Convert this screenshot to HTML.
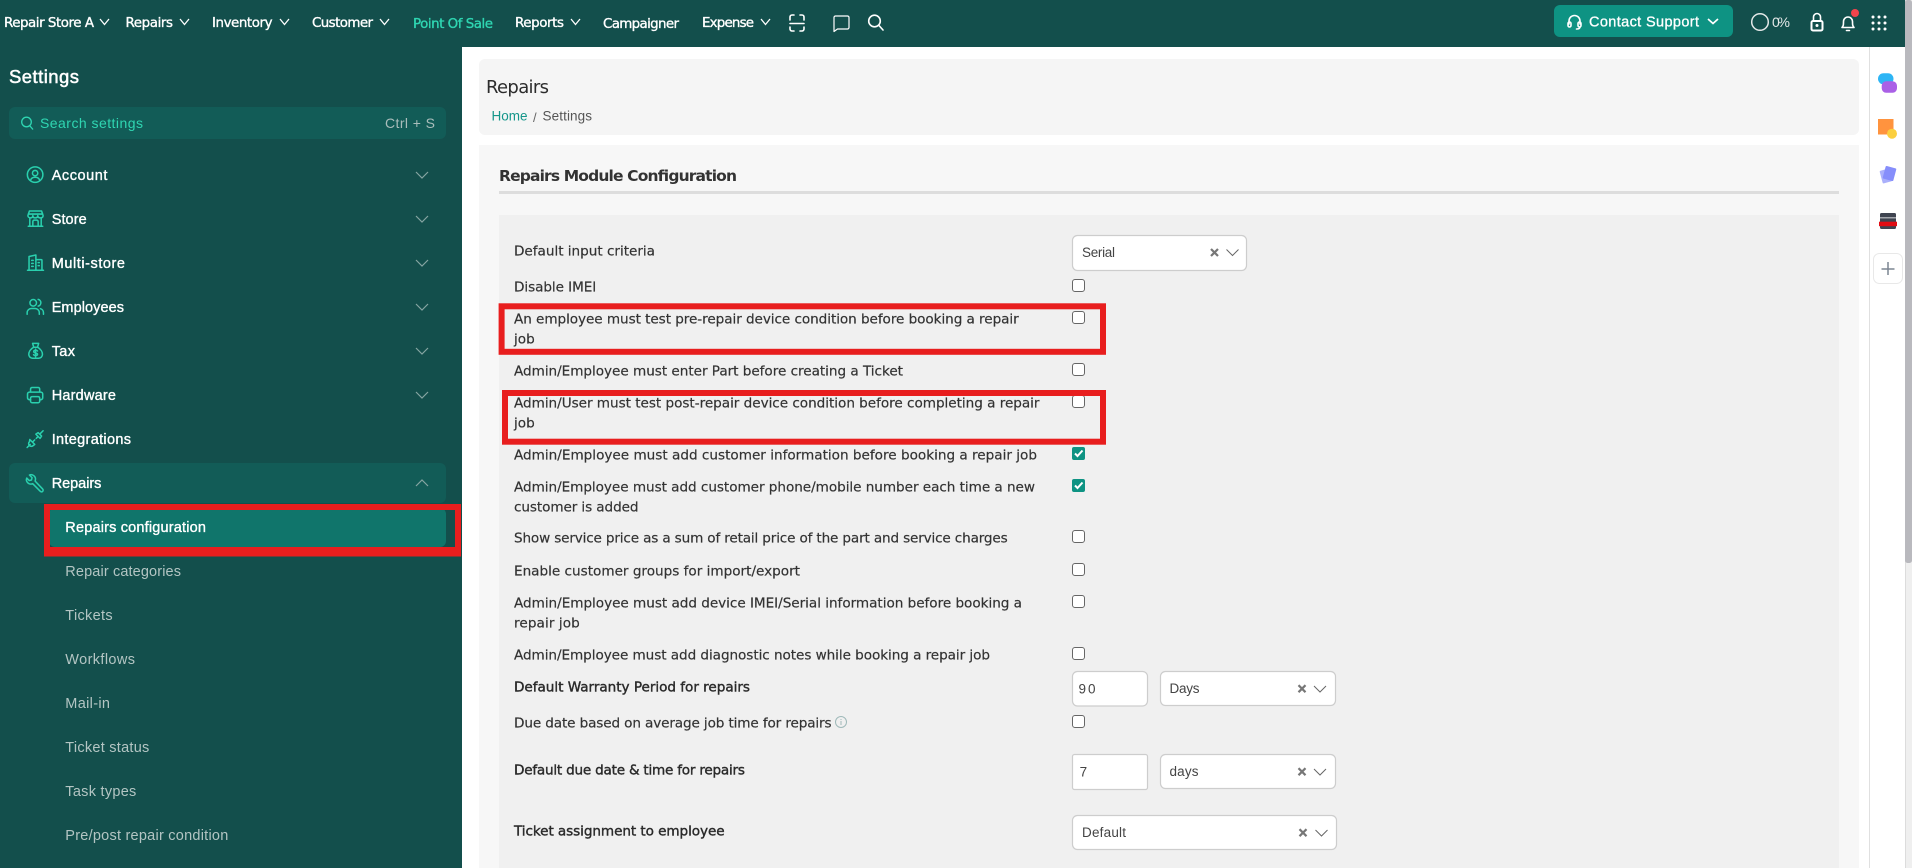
<!DOCTYPE html>
<html lang="en"><head><meta charset="utf-8"><title>Repairs Settings</title>
<style>
html,body{margin:0;padding:0;background:#fff;width:1912px;height:868px;overflow:hidden}
svg{display:block}
.nav{font:13.4px "DejaVu Sans",sans-serif;fill:#fff;stroke:#fff;stroke-width:.35}
.side{font:14.5px "Liberation Sans",sans-serif;fill:#fff;stroke:#fff;stroke-width:.35}
.sub{font:14.5px "Liberation Sans",sans-serif;fill:#b3c5c3}
.lbl{font:13.6px "DejaVu Sans",sans-serif;fill:#333;stroke:#333;stroke-width:.2}
.lbb{font:13.6px "DejaVu Sans",sans-serif;fill:#2a2a2a;stroke:#2a2a2a;stroke-width:.4}
.val{font:13.5px "Liberation Sans",sans-serif;fill:#444}
.ic{fill:none;stroke:#2ad0ae;stroke-width:2;stroke-linecap:round;stroke-linejoin:round}
.chv{fill:none;stroke:#86a5a2;stroke-width:1.2}
.nc{fill:none;stroke:#fff;stroke-width:1.3}
.w{fill:none;stroke:#fff;stroke-width:1.6;stroke-linecap:round;stroke-linejoin:round}
.cb{fill:#fff;stroke:#666;stroke-width:1}
.fld{fill:#fff;stroke:#cdcdcd;stroke-width:1.2}
.x{fill:none;stroke:#777;stroke-width:2.2}
.sc{fill:none;stroke:#666;stroke-width:1}
.red{fill:none;stroke:#e81e1e;stroke-width:6}
</style></head><body>
<svg xmlns="http://www.w3.org/2000/svg" width="1912" height="868" viewBox="0 0 1912 868">
<rect width="1912" height="868" fill="#fff"/>
<!-- header -->
<rect width="1905" height="47" fill="#134f4c"/>
<rect y="47" width="462" height="821" fill="#134f4c"/>
<g class="nav">
<text x="4" y="27" textLength="90">Repair Store A</text>
<text x="125.500" y="27" textLength="47.500">Repairs</text>
<text x="212" y="27" textLength="60.500">Inventory</text>
<text x="312" y="27" textLength="61">Customer</text>
<text x="413" y="28" textLength="80" style="fill:#2fd6b2;stroke:#2fd6b2">Point Of Sale</text>
<text x="515" y="27" textLength="49">Reports</text>
<text x="603" y="28" textLength="76">Campaigner</text>
<text x="702" y="27" textLength="52">Expense</text>
</g>
<g class="nc">
<path d="M100 19l4.500 5.500 4.500-5.500"/><path d="M180 19l4.500 5.500 4.500-5.500"/><path d="M280 19l4.500 5.500 4.500-5.500"/><path d="M380 19l4.500 5.500 4.500-5.500"/><path d="M571 19l4.500 5.500 4.500-5.500"/><path d="M761 19l4.500 5.500 4.500-5.500"/>
</g>
<g class="w">
<path d="M790 20v-3a2 2 0 0 1 2-2h2M800 15h2a2 2 0 0 1 2 2v3M804 27v2a2 2 0 0 1-2 2h-2M794 31h-2a2 2 0 0 1-2-2v-2M790 23.500h14"/>
<path d="M834 17.500a1.500 1.500 0 0 1 1.500-1.500h12a1.500 1.500 0 0 1 1.500 1.500v10a1.500 1.500 0 0 1-1.500 1.500h-10l-3.500 2.500z" stroke-width="1.200"/>
<circle cx="874.500" cy="21" r="5.800"/><path d="M879 25.500l4 4.500"/>
</g>
<!-- contact support -->
<rect x="1554" y="5" width="179" height="32" rx="6" fill="#0e9383"/>
<g class="w">
<path d="M1569 24v-3a5.500 5.500 0 0 1 11 0v3"/><rect x="1568" y="22" width="3" height="5" rx="1.500"/><rect x="1578" y="22" width="3" height="5" rx="1.500"/><path d="M1580 27c0 1.500-1.500 2-3.500 2"/>
</g>
<text x="1589" y="26.500" textLength="110" style="font:14.500px 'Liberation Sans',sans-serif;fill:#fff;stroke:#fff;stroke-width:.3">Contact Support</text>
<path d="M1708 19l5 4.500 5-4.500" fill="none" stroke="#fff" stroke-width="1.700"/>
<circle cx="1760" cy="22" r="8.300" fill="none" stroke="#e4e8e8" stroke-width="1.500"/>
<text x="1772" y="27" textLength="18" style="font:14px 'Liberation Sans',sans-serif;fill:#e4e8e8">0%</text>
<g class="w">
<rect x="1811.500" y="21" width="11" height="9.500" rx="1.500" stroke-width="2"/><path d="M1813.500 20.500v-3.500a3.500 3.500 0 0 1 7 0v3.500"/>
<circle cx="1817" cy="25.500" r="1.500" fill="#fff" stroke="none"/>
<path d="M1842 27.500c1.500-1.500 1.500-3 1.500-6a4.500 4.500 0 0 1 9 0c0 3 0 4.500 1.500 6z"/><path d="M1846.500 30.500h3"/>
</g>
<circle cx="1855" cy="13" r="4" fill="#f2444c"/>
<g fill="#fff">
<circle cx="1873" cy="17" r="1.500"/><circle cx="1879" cy="17" r="1.500"/><circle cx="1885" cy="17" r="1.500"/>
<circle cx="1873" cy="23" r="1.500"/><circle cx="1879" cy="23" r="1.500"/><circle cx="1885" cy="23" r="1.500"/>
<circle cx="1873" cy="29" r="1.500"/><circle cx="1879" cy="29" r="1.500"/><circle cx="1885" cy="29" r="1.500"/>
</g>
<!-- sidebar -->
<text x="9" y="83" textLength="70" style="font:18.500px 'Liberation Sans',sans-serif;fill:#fff;stroke:#fff;stroke-width:.5">Settings</text>
<rect x="9" y="107" width="437" height="32" rx="6" fill="#125c57"/>
<circle cx="26.500" cy="122" r="4.800" fill="none" stroke="#2fd6b2" stroke-width="1.300"/><path d="M30 126l3 3.500" stroke="#2fd6b2" stroke-width="1.300"/>
<text x="40" y="128" textLength="103" style="font:14px 'Liberation Sans',sans-serif;fill:#2fd6b2">Search settings</text>
<text x="385" y="128" textLength="50" style="font:14px 'Liberation Sans',sans-serif;fill:#a9bdbb">Ctrl + S</text>
<rect x="9" y="463" width="437" height="40" rx="6" fill="#125c57"/>
<rect x="49" y="508" width="397" height="39" rx="6" fill="#10756b"/>
<g class="side">
<text x="51.700" y="180" textLength="55.700">Account</text>
<text x="51.700" y="224" textLength="35">Store</text>
<text x="51.700" y="268" textLength="73.300">Multi-store</text>
<text x="51.700" y="312" textLength="72.300">Employees</text>
<text x="51.700" y="356" textLength="23.300">Tax</text>
<text x="51.700" y="400" textLength="64.300">Hardware</text>
<text x="51.700" y="444" textLength="79.300">Integrations</text>
<text x="51.700" y="488" textLength="49.700">Repairs</text>
<text x="65.300" y="532" textLength="140.700">Repairs configuration</text>
</g>
<g class="sub">
<text x="65.300" y="576" textLength="115.700">Repair categories</text>
<text x="65.300" y="620" textLength="47.300">Tickets</text>
<text x="65.300" y="664" textLength="69.700">Workflows</text>
<text x="65.300" y="708" textLength="44.700">Mail-in</text>
<text x="65.300" y="752" textLength="84">Ticket status</text>
<text x="65.300" y="796" textLength="71">Task types</text>
<text x="65.300" y="840" textLength="163">Pre/post repair condition</text>
</g>
<g class="chv">
<path d="M416 172l6 6 6-6"/><path d="M416 216l6 6 6-6"/><path d="M416 260l6 6 6-6"/><path d="M416 304l6 6 6-6"/><path d="M416 348l6 6 6-6"/><path d="M416 392l6 6 6-6"/><path d="M416 486l6-6 6 6"/>
</g>
<!-- sidebar icons -->
<g class="ic">
<g transform="translate(26,165.500) scale(.76)"><circle cx="12" cy="12" r="10.200"/><circle cx="12" cy="10" r="3.500"/><path d="M6 19.500c.8-2.800 3-4 6-4s5.200 1.200 6 4"/></g>
<g transform="translate(26,209.500) scale(.76)"><path d="M3 22h19M5 22V11M20 22V11M2.500 8l2-6h16l2 6c0 2-1.500 3-3.500 3s-3.500-1-3.500-3c0 2-1.500 3-3.500 3S9 10 9 8c0 2-1.500 3-3 3S2.500 10 2.500 8zM3 6h19M9 22v-6a2 2 0 0 1 2-2h3a2 2 0 0 1 2 2v6"/></g>
<g transform="translate(26,253.500) scale(.76)"><path d="M2 22h21M4 22V4l9-2v20M13 8h7a1 1 0 0 1 1 1v13M7.500 9h2M7.500 13h2M7.500 17h2M16 12h1.500M16 16h1.500"/></g>
<g transform="translate(26,297.500) scale(.76)"><circle cx="9.500" cy="7" r="4.300"/><path d="M1.500 22v-2a5.500 5.500 0 0 1 5.500-5.500h5a5.500 5.500 0 0 1 5.500 5.500v2M16 2.500a4.500 4.500 0 0 1 0 8.800M19 14.700a5.500 5.500 0 0 1 4 5.300v2"/></g>
<g transform="translate(26.500,341.500) scale(.76)"><path d="M8 2.500h8l-1.500 5h-5zM9.500 7.500C5 10 3 14 3 17c0 3 2.500 5 5 5h8c2.500 0 5-2 5-5 0-3-2-7-6.500-9.500M14.500 12.500c-.5-.8-1.400-1-2.500-1-1.500 0-2.500.7-2.500 1.800 0 2.500 5 1 5 3.500 0 1-1 1.700-2.500 1.700-1.200 0-2.100-.3-2.700-1.200M12 10v10"/></g>
<g transform="translate(26,386) scale(.76)"><path d="M6 8V4a2 2 0 0 1 2-2h8a2 2 0 0 1 2 2v4M6 18H4.500A2.500 2.500 0 0 1 2 15.500v-5A2.500 2.500 0 0 1 4.500 8h15a2.500 2.500 0 0 1 2.500 2.500v5a2.500 2.500 0 0 1-2.500 2.500H18"/><rect x="6" y="14" width="12" height="8" rx="2"/></g>
<g transform="translate(26,430) scale(.76)"><path d="M1.500 23l4-4M22.500 1l-3.500 3.500M11.500 13l-2 2M15 9.500l-1.500 1.500M13 5.500l5.500 5.500 2-3-4.500-4.500zM5 12.500l6.500 6.500-2 1.500a3.500 3.500 0 0 1-5-5z"/></g>
<g transform="translate(26,473.500) scale(.76)"><path d="M22 20.500L12 10c1-3 .3-5.500-1.500-7S6.500 1.200 4.500 2l3.500 3.500-.8 3-3 .8L1 6c-.8 2-.5 4.500 1.300 6.200s4.200 2.200 6.500 1.200l10 10a1.500 1.500 0 0 0 3.200-2.900z"/></g>
</g>
<!-- main panels -->
<rect x="479" y="59" width="1380" height="76" rx="6" fill="#f5f5f5"/>
<rect x="479" y="145" width="1380" height="723" fill="#f7f7f7"/>
<text x="486" y="93" textLength="63" style="font:18px 'DejaVu Sans',sans-serif;fill:#2c2c2c">Repairs</text>
<text x="491.500" y="120.500" textLength="36" style="font:13.500px 'Liberation Sans',sans-serif;fill:#15968a">Home</text>
<text x="533" y="122" style="font:13px 'Liberation Sans',sans-serif;fill:#666">/</text>
<text x="542.500" y="120.500" textLength="49.500" style="font:13.500px 'Liberation Sans',sans-serif;fill:#555">Settings</text>
<text x="499" y="181" textLength="238" style="font:bold 15.500px 'DejaVu Sans',sans-serif;fill:#333">Repairs Module Configuration</text>
<rect x="499" y="191" width="1340" height="3" fill="#ddd"/>
<rect x="499" y="215" width="1340" height="653" fill="#f0f0f0"/>
<!-- labels -->
<g class="lbl">
<text x="514" y="255.500" textLength="141">Default input criteria</text>
<text x="514" y="291.500" textLength="82.300">Disable IMEI</text>
<text x="514" y="323.500" textLength="504.700">An employee must test pre-repair device condition before booking a repair</text>
<text x="514" y="343.500" textLength="20.800">job</text>
<text x="514" y="375.500" textLength="389">Admin/Employee must enter Part before creating a Ticket</text>
<text x="514" y="407.500" textLength="525.500">Admin/User must test post-repair device condition before completing a repair</text>
<text x="514" y="427.500" textLength="20.800">job</text>
<text x="514" y="459.500" textLength="523">Admin/Employee must add customer information before booking a repair job</text>
<text x="514" y="491.500" textLength="521">Admin/Employee must add customer phone/mobile number each time a new</text>
<text x="514" y="511.500" textLength="124.500">customer is added</text>
<text x="514" y="542.500" textLength="493.700">Show service price as a sum of retail price of the part and service charges</text>
<text x="514" y="575.500" textLength="286">Enable customer groups for import/export</text>
<text x="514" y="607.500" textLength="508">Admin/Employee must add device IMEI/Serial information before booking a</text>
<text x="514" y="627.500" textLength="65.800">repair job</text>
<text x="514" y="659.500" textLength="476">Admin/Employee must add diagnostic notes while booking a repair job</text>
<text x="514" y="727.500" textLength="317.600">Due date based on average job time for repairs</text>
</g>
<g class="lbb">
<text x="514" y="691.500" textLength="236">Default Warranty Period for repairs</text>
<text x="514" y="774.500" textLength="231">Default due date &amp; time for repairs</text>
<text x="514" y="835.500" textLength="210.600">Ticket assignment to employee</text>
</g>
<circle cx="841" cy="722" r="5.500" fill="none" stroke="#9fb9b9" stroke-width="1"/><path d="M841 721v4M841 719v1" stroke="#9fb9b9" stroke-width="1"/>
<!-- checkboxes -->
<g class="cb">
<rect x="1072.500" y="279.500" width="12" height="12" rx="2.500"/>
<rect x="1072.500" y="311.500" width="12" height="12" rx="2.500"/>
<rect x="1072.500" y="363.500" width="12" height="12" rx="2.500"/>
<rect x="1072.500" y="395.500" width="12" height="12" rx="2.500"/>
<rect x="1072.500" y="530.500" width="12" height="12" rx="2.500"/>
<rect x="1072.500" y="563.500" width="12" height="12" rx="2.500"/>
<rect x="1072.500" y="595.500" width="12" height="12" rx="2.500"/>
<rect x="1072.500" y="647.500" width="12" height="12" rx="2.500"/>
<rect x="1072.500" y="715.500" width="12" height="12" rx="2.500"/>
</g>
<rect x="1072" y="447" width="13" height="13" rx="2" fill="#0e9383"/>
<rect x="1072" y="479" width="13" height="13" rx="2" fill="#0e9383"/>
<path d="M1075 453.500l2.500 2.500 5-5.500M1075 485.500l2.500 2.500 5-5.500" fill="none" stroke="#fff" stroke-width="2"/>
<!-- fields -->
<g class="fld">
<rect x="1072.500" y="235.500" width="174" height="35" rx="5"/>
<rect x="1072.500" y="671.500" width="75" height="34.500" rx="5"/>
<rect x="1160.500" y="671.500" width="175" height="34" rx="5"/>
<rect x="1072.500" y="754.500" width="75" height="35" rx="2"/>
<rect x="1160.500" y="754.500" width="175" height="34" rx="5"/>
<rect x="1072.500" y="815.500" width="264" height="34" rx="5"/>
</g>
<g class="val">
<text x="1082" y="257" textLength="33">Serial</text>
<text x="1078.500" y="693.500" textLength="17">90</text>
<text x="1169.500" y="693" textLength="30">Days</text>
<text x="1079.600" y="776.500" textLength="7">7</text>
<text x="1169.500" y="776" textLength="29">days</text>
<text x="1082" y="837" textLength="44">Default</text>
</g>
<g class="x">
<path d="M1211 249l7 7m0-7l-7 7"/><path d="M1298.500 685.200l7 7m0-7l-7 7"/><path d="M1298.500 768.200l7 7m0-7l-7 7"/><path d="M1299.500 829.200l7 7m0-7l-7 7"/>
</g>
<g class="sc">
<path d="M1226.500 249.500l6 6 6-6"/><path d="M1314 686l6 6 6-6"/><path d="M1314 769l6 6 6-6"/><path d="M1315.500 830l6 6 6-6"/>
</g>
<!-- red annotation rectangles -->
<rect class="red" x="47" y="507" width="411" height="46"/>
<rect x="44" y="547" width="417" height="9.500" fill="#e81e1e"/>
<rect class="red" x="501.600" y="306.300" width="601.400" height="45.500"/>
<rect class="red" x="505" y="393" width="598" height="48.700"/>
<!-- right rail -->
<rect x="1869" y="47" width="1" height="821" fill="#e0e0e0"/>
<rect x="1878" y="73.300" width="15.500" height="11" rx="5.500" fill="#2db5f5"/>
<rect x="1881.700" y="81.300" width="15.300" height="11.500" rx="4.500" fill="#aa60e6"/>
<rect x="1878" y="119" width="15.500" height="15.500" fill="#ff933e"/>
<circle cx="1892" cy="133.700" r="5" fill="#fbcf3f"/>
<rect x="1881" y="169.500" width="10" height="13" rx="1" fill="#aab0fb" transform="rotate(-15 1886 176)"/>
<rect x="1884" y="167" width="11" height="13" rx="1" fill="#868efb" transform="rotate(15 1889.500 173.500)"/>
<rect x="1880" y="213" width="16" height="16" rx="1.500" fill="#3f4450"/>
<rect x="1880" y="217" width="16" height="1.500" fill="#a4a7ad"/>
<rect x="1879" y="221.700" width="18" height="4.500" fill="#e20d14"/>
<rect x="1873.500" y="253.500" width="29" height="30" rx="6" fill="#fff" stroke="#e8e8e8"/>
<path d="M1888 262v13M1881.500 269h13" stroke="#7c8592" stroke-width="1.500" fill="none"/>
<!-- scrollbar -->
<rect x="1905" y="0" width="7" height="868" fill="#efefef"/>
<rect x="1905" y="0" width="1" height="868" fill="#dcdcdc"/>
<rect x="1905" y="0" width="7" height="563" rx="2.500" fill="#b9b9be"/>
</svg>
</body></html>
